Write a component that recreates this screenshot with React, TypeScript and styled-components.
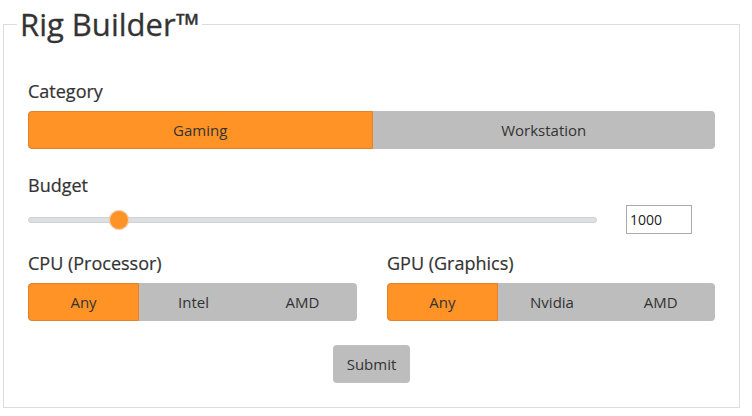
import React from "react";
import styled, { createGlobalStyle } from "styled-components";

const GlobalStyle = createGlobalStyle`
	body {
		margin: 0;
		background: #fff;
		font-family: "Open Sans", "Noto Sans", sans-serif;
		color: #333;
	}
`;

const Frame = styled.fieldset`
	margin: 0 0 0 3px;
	width: 737px;
	box-sizing: border-box;
	height: 408px;
	border: 1px solid #dcdcdc;
	padding: 10px 24px 0 24px;
	display: flex;
	flex-direction: column;
`;

const Title = styled.legend`
	font-size: 31px;
	line-height: 48px;
	padding: 0 3px;
	margin-left: -11px;
	color: #333;
	-webkit-text-stroke: 0.3px #333;
`;

const Label = styled.div`
	font-size: 18px;
	line-height: 24px;
	margin-bottom: 8px;
	color: #333;
	-webkit-text-stroke: 0.2px #333;
`;

const Section = styled.div<{ $top: number }>`
	margin-top: ${(p) => p.$top}px;
`;

const Toggle = styled.div`
	display: flex;
	height: 38px;
	border-radius: 4px;
	overflow: hidden;
	background: #bdbdbd;
`;

const Segment = styled.button<{ $active?: boolean }>`
	flex: 1;
	border: ${(p) => (p.$active ? "1px solid #e38325" : "none")};
	border-radius: ${(p) => (p.$active ? "4px 0 0 4px" : "0")};
	background: ${(p) => (p.$active ? "#ff9326" : "transparent")};
	font-family: inherit;
	font-size: 15px;
	color: #333;
	padding: 0;
	cursor: pointer;
`;

const BudgetRow = styled.div`
	display: flex;
	align-items: center;
	height: 29px;
	margin-top: 3px;
`;

const Range = styled.input`
	-webkit-appearance: none;
	appearance: none;
	width: 569px;
	height: 6px;
	margin: 0;
	border-radius: 3px;
	background: #dde0e2;
	border: 1px solid #cfd3d5;
	box-sizing: border-box;
	&::-webkit-slider-thumb {
		-webkit-appearance: none;
		width: 20px;
		height: 20px;
		border-radius: 50%;
		background: #ff9326;
		border: 1px solid #f5d6b3;
		box-shadow: 0 0 1px rgba(0, 0, 0, 0.2);
	}
`;

const NumberBox = styled.input`
	margin-left: 29px;
	width: 66px;
	height: 29px;
	box-sizing: border-box;
	border: 1px solid #aaa;
	padding: 0 3px;
	font-family: "Open Sans", sans-serif;
	font-size: 14px;
	color: #222;
	outline: none;
`;

const Columns = styled.div`
	display: grid;
	grid-template-columns: 329px 328px;
	column-gap: 30px;
	margin-top: 17px;
`;

const Actions = styled.div`
	display: flex;
	justify-content: center;
	margin-top: 24px;
`;

const Submit = styled.button`
	width: 77px;
	height: 38px;
	border: none;
	border-radius: 4px;
	background: #bdbdbd;
	font-family: inherit;
	font-size: 15px;
	color: #333;
	cursor: pointer;
`;

function Choice({ options, value, onPick }: { options: string[]; value: string; onPick: (v: string) => void }) {
	return (
		<Toggle>
			{options.map((o) => (
				<Segment key={o} $active={o === value} onClick={() => onPick(o)}>
					{o}
				</Segment>
			))}
		</Toggle>
	);
}

export default function App() {
	const [category, setCategory] = React.useState("Gaming");
	const [budget, setBudget] = React.useState(1000);
	const [cpu, setCpu] = React.useState("Any");
	const [gpu, setGpu] = React.useState("Any");

	return (
		<>
			<GlobalStyle />
			<Frame>
				<Title>Rig Builder™</Title>
				<Section $top={21}>
					<Label>Category</Label>
					<Choice options={["Gaming", "Workstation"]} value={category} onPick={setCategory} />
				</Section>
				<Section $top={24}>
					<Label>Budget</Label>
					<BudgetRow>
						<Range
							type="range"
							min={500}
							max={3900}
							value={budget}
							onChange={(e) => setBudget(Number(e.target.value))}
						/>
						<NumberBox type="text" value={budget} onChange={(e) => setBudget(Number(e.target.value) || 0)} />
					</BudgetRow>
				</Section>
				<Columns>
					<div>
						<Label>CPU (Processor)</Label>
						<Choice options={["Any", "Intel", "AMD"]} value={cpu} onPick={setCpu} />
					</div>
					<div>
						<Label>GPU (Graphics)</Label>
						<Choice options={["Any", "Nvidia", "AMD"]} value={gpu} onPick={setGpu} />
					</div>
				</Columns>
				<Actions>
					<Submit>Submit</Submit>
				</Actions>
			</Frame>
		</>
	);
}
